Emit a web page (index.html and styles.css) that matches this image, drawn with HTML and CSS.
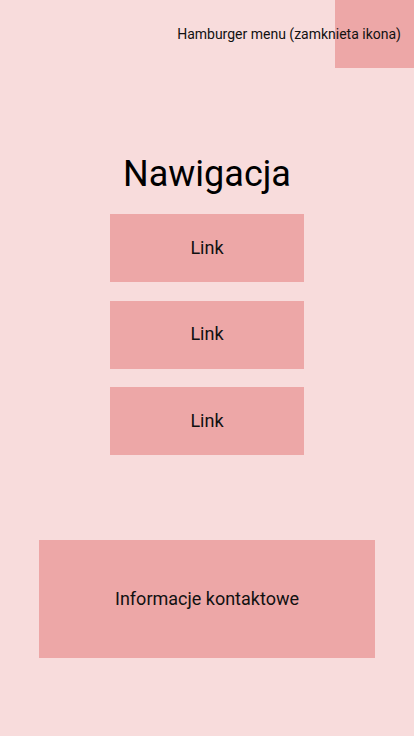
FILE: index.html
```html
<!DOCTYPE html>
<html lang="pl">
<head>
<meta charset="utf-8">
<title>Nawigacja</title>
<link rel="stylesheet" href="styles.css">
</head>
<body>
<header class="topbar">
  <span class="menu-label">Hamburger menu (zamknieta ikona)</span>
  <div class="menu-box"></div>
</header>
<main class="nav">
  <h1 class="nav-title">Nawigacja</h1>
  <ul class="nav-list">
    <li class="nav-item">Link</li>
    <li class="nav-item">Link</li>
    <li class="nav-item">Link</li>
  </ul>
</main>
<footer class="contact">Informacje kontaktowe</footer>
</body>
</html>
```
FILE: styles.css
```css
html, body {
  margin: 0;
  padding: 0;
}
body {
  width: 414px;
  height: 736px;
  background: #f8dcdc;
  font-family: Roboto, "Noto Sans", sans-serif;
  color: #111;
  overflow: hidden;
}
.topbar {
  position: relative;
  height: 68px;
  display: flex;
  justify-content: flex-end;
  align-items: center;
  padding-right: 13px;
}
.menu-box {
  position: absolute;
  top: 0;
  right: 0;
  width: 79px;
  height: 68px;
  background: #eda7a7;
}
.menu-label {
  position: relative;
  z-index: 1;
  font-size: 14px;
}
.nav {
  display: flex;
  flex-direction: column;
  align-items: center;
  padding-top: 86px;
}
.nav-title {
  margin: 0;
  font-size: 36px;
  font-weight: 400;
  line-height: 40px;
  color: #000;
}
.nav-list {
  list-style: none;
  margin: 20px 0 0;
  padding: 0;
  display: flex;
  flex-direction: column;
  gap: 18.5px;
}
.nav-item {
  box-sizing: border-box;
  width: 194px;
  height: 68px;
  padding-bottom: 2px;
  background: #eda7a7;
  display: flex;
  align-items: center;
  justify-content: center;
  font-size: 18px;
}
.contact {
  box-sizing: border-box;
  margin: 85px 39px 0;
  height: 118px;
  padding-bottom: 2px;
  background: #eda7a7;
  display: flex;
  align-items: center;
  justify-content: center;
  font-size: 18px;
}
```
